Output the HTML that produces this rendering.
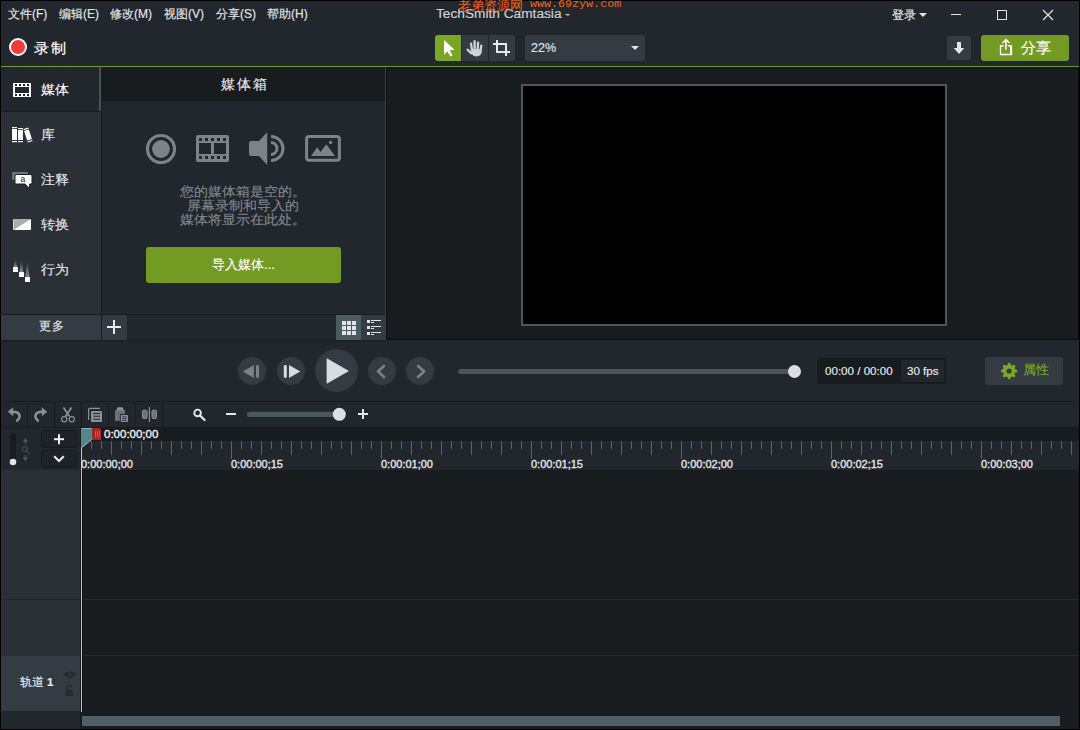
<!DOCTYPE html>
<html><head><meta charset="utf-8">
<style>
*{margin:0;padding:0;box-sizing:border-box}
html,body{width:1080px;height:730px;overflow:hidden;background:#000}
body{position:relative;font-family:"Liberation Sans",sans-serif;color:#e6e8eb}
.a{position:absolute}
.t{position:absolute;white-space:nowrap;line-height:1;-webkit-text-stroke:0.15px currentColor}
</style></head><body>
<!-- window frame -->
<div class="a" style="left:1px;top:1px;width:1078px;height:728px;background:#22262d"></div>

<!-- top bar -->
<div class="t" style="left:8px;top:8px;font-size:12px;color:#e4e6e9">文件(F)</div>
<div class="t" style="left:59px;top:8px;font-size:12px;color:#e4e6e9">编辑(E)</div>
<div class="t" style="left:110px;top:8px;font-size:12px;color:#e4e6e9">修改(M)</div>
<div class="t" style="left:164px;top:8px;font-size:12px;color:#e4e6e9">视图(V)</div>
<div class="t" style="left:216px;top:8px;font-size:12px;color:#e4e6e9">分享(S)</div>
<div class="t" style="left:267px;top:8px;font-size:12px;color:#e4e6e9">帮助(H)</div>
<div class="t" style="left:436px;top:7px;font-size:13.7px;color:#cfd3d8">TechSmith Camtasia -</div>

<!-- record -->
<div class="a" style="left:9px;top:38px;width:18px;height:18px;border-radius:50%;background:#f03c3c;border:2px solid #fff"></div>
<div class="t" style="left:34px;top:41px;font-size:14px;letter-spacing:1.5px;transform:scaleX(1.08);transform-origin:0 0;color:#fff;-webkit-text-stroke:0.2px #fff">录制</div>

<!-- green separator -->
<div class="a" style="left:1px;top:66px;width:1078px;height:1px;background:#6f9a22"></div>


<!-- center tools -->
<div class="a" style="left:435px;top:35px;width:80px;height:26px;border-radius:3px;background:#353b42;overflow:hidden">
  <div class="a" style="left:0;top:0;width:26px;height:26px;background:#7aa723"></div>
  <div class="a" style="left:26px;top:0;width:1px;height:26px;background:#22262d"></div>
  <div class="a" style="left:53px;top:0;width:1px;height:26px;background:#22262d"></div>
</div>
<!-- zoom dropdown -->
<div class="a" style="left:525px;top:35px;width:120px;height:26px;border-radius:3px;background:#353b42"></div>
<div class="t" style="left:531px;top:42px;font-size:12.5px;color:#e0e3e6">22%</div>
<div class="a" style="left:631px;top:46px;width:0;height:0;border-left:4px solid transparent;border-right:4px solid transparent;border-top:4px solid #e4e6e9"></div>

<!-- login & window controls -->
<div class="t" style="left:892px;top:9.5px;font-size:11.5px;letter-spacing:0.3px;color:#e4e6e9">登录</div>
<div class="a" style="left:919px;top:13px;width:0;height:0;border-left:4px solid transparent;border-right:4px solid transparent;border-top:4px solid #e4e6e9"></div>
<div class="a" style="left:951px;top:14px;width:10px;height:1px;background:#e4e6e9"></div>
<div class="a" style="left:997px;top:10px;width:10px;height:10px;border:1px solid #e4e6e9"></div>
<svg class="a" style="left:1042px;top:9px" width="12" height="12" viewBox="0 0 12 12"><path d="M1 1L11 11M11 1L1 11" stroke="#e4e6e9" stroke-width="1.2"/></svg>

<!-- download & share -->
<div class="a" style="left:947px;top:36px;width:24px;height:24px;border-radius:2px;background:#353b42"></div>
<svg class="a" style="left:953px;top:41px" width="12" height="14" viewBox="0 0 12 14"><path d="M4 1h4v6h3l-5 6l-5-6h3z" fill="#e8eaed"/></svg>
<div class="a" style="left:981px;top:35px;width:88px;height:26px;border-radius:3px;background:#739a22"></div>
<svg class="a" style="left:999px;top:38px" width="14" height="18" viewBox="0 0 14 18"><path d="M7 1.5v10M3.5 5L7 1.5L10.5 5M4.5 8H1.5v8.5h11V8H9.5" fill="none" stroke="#fff" stroke-width="1.3"/></svg>
<div class="t" style="left:1021px;top:40px;font-size:15px;color:#fff">分享</div>

<!-- LEFT TABS -->
<div class="a" style="left:1px;top:67px;width:100px;height:247px;background:#2b3037"></div>
<div class="a" style="left:1px;top:67px;width:98px;height:44px;background:#22262d"></div>
<div class="a" style="left:99px;top:67px;width:2px;height:44px;background:#4a5258"></div>
<div class="a" style="left:1px;top:111px;width:100px;height:1px;background:#191c1f"></div>
<div class="a" style="left:101px;top:67px;width:1px;height:274px;background:#191c1f"></div>
<div class="a" style="left:1px;top:314px;width:385px;height:1px;background:#191c1f"></div>

<div class="t" style="left:41px;top:83px;font-size:13px;transform:scaleX(1.077);transform-origin:0 0;-webkit-text-stroke:0.15px currentColor;color:#fff">媒体</div>
<div class="t" style="left:41px;top:128px;font-size:13px;transform:scaleX(1.077);transform-origin:0 0;-webkit-text-stroke:0.15px currentColor;color:#e4e6e9">库</div>
<div class="t" style="left:41px;top:173px;font-size:13px;transform:scaleX(1.077);transform-origin:0 0;-webkit-text-stroke:0.15px currentColor;color:#e4e6e9">注释</div>
<div class="t" style="left:41px;top:218px;font-size:13px;transform:scaleX(1.077);transform-origin:0 0;-webkit-text-stroke:0.15px currentColor;color:#e4e6e9">转换</div>
<div class="t" style="left:41px;top:263px;font-size:13px;transform:scaleX(1.077);transform-origin:0 0;-webkit-text-stroke:0.15px currentColor;color:#e4e6e9">行为</div>

<!-- more footer -->
<div class="a" style="left:1px;top:315px;width:100px;height:25px;background:#353b42"></div>
<div class="t" style="left:39px;top:320px;font-size:12px;letter-spacing:0.5px;color:#e4e6e9">更多</div>
<div class="a" style="left:102px;top:315px;width:25px;height:25px;background:#353b42"></div>
<div class="a" style="left:107px;top:326px;width:14px;height:2px;background:#e8eaed"></div>
<div class="a" style="left:113px;top:320px;width:2px;height:14px;background:#e8eaed"></div>

<!-- MEDIA BIN -->
<div class="a" style="left:102px;top:67px;width:284px;height:247px;background:#22262d"></div>
<div class="a" style="left:102px;top:67px;width:284px;height:34px;background:#191c1f"></div>
<div class="t" style="left:221px;top:77px;font-size:14px;letter-spacing:2px;color:#e8eaed">媒体箱</div>
<div class="a" style="left:386px;top:67px;width:1px;height:273px;background:#0c0e10"></div>
<div class="a" style="left:385px;top:67px;width:1px;height:248px;background:#3a4046"></div>

<div class="t" style="left:180px;top:185px;font-size:13px;transform:scaleX(1.077);transform-origin:0 0;-webkit-text-stroke:0.15px currentColor;color:#80868e">您的媒体箱是空的。</div>
<div class="t" style="left:187px;top:199px;font-size:13px;transform:scaleX(1.077);transform-origin:0 0;-webkit-text-stroke:0.15px currentColor;color:#80868e">屏幕录制和导入的</div>
<div class="t" style="left:180px;top:213px;font-size:13px;transform:scaleX(1.077);transform-origin:0 0;-webkit-text-stroke:0.15px currentColor;color:#80868e">媒体将显示在此处。</div>
<div class="a" style="left:146px;top:247px;width:195px;height:36px;border-radius:3px;background:#739a22"></div>
<div class="t" style="left:146px;top:258px;width:195px;text-align:center;font-size:13px;color:#fff">导入媒体...</div>

<!-- view buttons -->
<div class="a" style="left:336px;top:315px;width:25px;height:25px;background:#4b5c5f"></div>
<div class="a" style="left:361px;top:315px;width:25px;height:25px;background:#353b42"></div>

<!-- CANVAS -->
<div class="a" style="left:387px;top:67px;width:691px;height:272px;background:#191c1f"></div>
<div class="a" style="left:1078px;top:67px;width:1px;height:273px;background:#0c0e10"></div>
<div class="a" style="left:387px;top:67px;width:691px;height:1px;background:#0c0e10"></div>
<div class="a" style="left:1060px;top:716px;width:2px;height:10px;background:#2c3237"></div>
<div class="a" style="left:521px;top:84px;width:426px;height:242px;background:#000;border:2px solid #545454"></div>
<div class="a" style="left:386px;top:339px;width:693px;height:1px;background:#0c0e10"></div>
<div class="a" style="left:1px;top:340px;width:385px;height:1px;background:#191c1f"></div>

<!-- PLAYBACK BAR -->
<div class="a" style="left:1px;top:341px;width:1078px;height:60px;background:#22262d"></div>
<div class="a" style="left:387px;top:340px;width:692px;height:1px;background:#22262d"></div>
<div class="a" style="left:238px;top:357px;width:28px;height:28px;border-radius:50%;background:#353b42"></div>
<div class="a" style="left:277px;top:357px;width:28px;height:28px;border-radius:50%;background:#353b42"></div>
<div class="a" style="left:315px;top:349px;width:43px;height:43px;border-radius:50%;background:#353b42"></div>
<div class="a" style="left:368px;top:357px;width:28px;height:28px;border-radius:50%;background:#353b42"></div>
<div class="a" style="left:406px;top:357px;width:28px;height:28px;border-radius:50%;background:#353b42"></div>

<div class="a" style="left:458px;top:369px;width:338px;height:5px;border-radius:3px;background:#48575a"></div>
<div class="a" style="left:788px;top:365px;width:13px;height:13px;border-radius:50%;background:#dcdfe4"></div>

<div class="a" style="left:817px;top:358px;width:129px;height:26px;border-radius:2px;background:#191c1f"></div>
<div class="a" style="left:901px;top:360px;width:43px;height:22px;border-radius:1px;background:#22262d"></div>
<div class="t" style="left:825px;top:365px;font-size:11.6px;color:#e8eaed">00:00 / 00:00</div>
<div class="t" style="left:907px;top:365px;font-size:11.6px;color:#e8eaed">30 fps</div>

<div class="a" style="left:985px;top:357px;width:78px;height:28px;border-radius:3px;background:#353b42"></div>
<div class="t" style="left:1023px;top:363.5px;font-size:12.5px;letter-spacing:0.3px;color:#7aa82a">属性</div>

<!-- TIMELINE TOOLBAR -->
<div class="a" style="left:1px;top:401px;width:1078px;height:1px;background:#191c1f"></div>
<div class="a" style="left:1px;top:427px;width:1078px;height:1px;background:#191c1f"></div>

<!-- TIMELINE -->
<div class="a" style="left:1px;top:428px;width:80px;height:42px;background:#22262d"></div>
<div class="a" style="left:1px;top:470px;width:79px;height:186px;background:#2b3037"></div>
<div class="a" style="left:1px;top:599px;width:79px;height:1px;background:#22262d"></div>
<div class="a" style="left:1px;top:656px;width:79px;height:55px;background:#353b42"></div>
<div class="a" style="left:1px;top:711px;width:79px;height:18px;background:#22262d"></div>
<div class="a" style="left:80px;top:428px;width:1px;height:301px;background:#191c1f"></div>

<div class="a" style="left:81px;top:428px;width:998px;height:13px;background:#191c1f"></div>
<div class="a" style="left:81px;top:441px;width:998px;height:29px;background:#22262d"></div>
<div class="a" style="left:81px;top:470px;width:998px;height:259px;background:#191c1f"></div>
<div class="a" style="left:81px;top:599px;width:998px;height:1px;background:#262a2f"></div>
<div class="a" style="left:81px;top:655px;width:998px;height:1px;background:#262a2f"></div>
<div class="a" style="left:82px;top:716px;width:978px;height:10px;background:#4f5f63"></div>

<div class="t" style="left:20px;top:676px;font-size:12px;color:#e8eaed">轨道<span style="font-weight:bold;margin-left:3px;font-size:11.5px">1</span></div>


<svg class="a" style="left:0;top:0" width="1080" height="730" viewBox="0 0 1080 730">
<defs>
<linearGradient id="trail" x1="0" y1="0" x2="0" y2="1"><stop offset="0" stop-color="#8a9096" stop-opacity="0"/><stop offset="1" stop-color="#8a9096" stop-opacity="0.9"/></linearGradient>
</defs>
<!-- tab icons -->
<path fill="#fff" fill-rule="evenodd" d="M13 83h18v14h-18z M15 84h2v2h-2z M19 84h2v2h-2z M23 84h2v2h-2z M27 84h2v2h-2z M15 94h2v2h-2z M19 94h2v2h-2z M23 94h2v2h-2z M27 94h2v2h-2z M15 87h14v6h-14z"/>
<g fill="#fff">
<rect x="12" y="129" width="5" height="11"/><rect x="12" y="127" width="5" height="1.2"/><rect x="12" y="141" width="5" height="1.2"/>
<rect x="18" y="130" width="5" height="10"/><rect x="18" y="128" width="5" height="1.2"/><rect x="18" y="141" width="5" height="1.2"/>
<g transform="rotate(-18 28 135)"><rect x="25.5" y="130" width="5" height="10"/><rect x="25.5" y="128" width="5" height="1.2"/><rect x="25.5" y="141" width="5" height="1.2"/></g>
</g>
<rect x="12" y="172" width="16" height="8" rx="1" fill="#6e747c"/>
<path d="M16.5 174.5h14a1.5 1.5 0 0 1 1.5 1.5v6.5a1.5 1.5 0 0 1-1.5 1.5h-0.7l-0.5 4.5l-4.2-4.5h-8.6a1.5 1.5 0 0 1-1.5-1.5v-6.5a1.5 1.5 0 0 1 1.5-1.5z" fill="#fff" stroke="#1c1f23" stroke-width="1"/>
<text x="20.6" y="182.4" font-family="Liberation Sans" font-size="8.5" fill="#111" style="font-family:'Liberation Sans'">a</text>
<rect x="13" y="219" width="18" height="11" rx="1" fill="#fff"/>
<path d="M14 219h17l-17.5 11v-10z" fill="#a9acb0"/>
<path d="M15.4 259L17.2 267H13.6z" fill="url(#trail)"/>
<path d="M21.4 259.5L23.4 272H19.4z" fill="url(#trail)"/>
<path d="M27.4 260L29.6 277H25.2z" fill="url(#trail)"/>
<rect x="13" y="267" width="5" height="5" rx="0.6" fill="#fff"/>
<rect x="19" y="272" width="5" height="5" rx="0.6" fill="#fff"/>
<rect x="25" y="277" width="5" height="5" rx="0.6" fill="#fff"/>

<!-- tools -->
<path d="M444 40L454.5 49.8L449.6 50.4L452.6 55.4L450.4 56.6L447.4 51.6L444 54.8z" fill="#fff"/>
<g fill="#d0d4da" stroke="#d0d4da" stroke-linecap="round"><path d="M471 43.6L472 50M474.6 41.2V50M478.1 42.6L477.6 50M481.3 45.6L480.4 51M467.6 49.6L471.2 53.2" stroke-width="2.3" fill="none"/>
<path d="M470.8 49.2H481.6V52Q481.2 56.4 476.6 56.4Q473.2 56.4 471.2 53.4z" stroke="none"/></g>
<path d="M493 44H506V56 M497 40V52H510" fill="none" stroke="#e8eaed" stroke-width="2"/>

<!-- share / download -->
<path d="M957 43h4v5.3h3.1l-5.1 4.9l-5.1-4.9h3.1z" fill="#e2e5e9"/>
<path d="M1005.5 49.5V39.8 M1002.4 42.9L1005.5 39.8L1008.6 42.9 M1003.5 45.5H1001.5a1 1 0 0 0-1 1V53.5a1 1 0 0 0 1 1H1009.5a1 1 0 0 0 1-1V46.5a1 1 0 0 0-1-1H1007.5" fill="none" stroke="#fff" stroke-width="1"/>

<!-- media bin icons -->
<g fill="#7d838b">
<circle cx="161" cy="149" r="13.5" fill="none" stroke="#7d838b" stroke-width="3.2"/>
<circle cx="161" cy="149" r="8.9"/>
<path fill-rule="evenodd" d="M198 135h29a2 2 0 0 1 2 2v23a2 2 0 0 1-2 2h-29a2 2 0 0 1-2-2v-23a2 2 0 0 1 2-2z M199 138h3v3h-3z M205 138h3v3h-3z M211 138h3v3h-3z M217 138h3v3h-3z M223 138h3v3h-3z M199 156h3v3h-3z M205 156h3v3h-3z M211 156h3v3h-3z M217 156h3v3h-3z M223 156h3v3h-3z M199 143h12v11h-12z M214 143h12v11h-12z"/>
<path d="M251 141h8l8.2-8.8v32.8l-8.2-9h-8a2 2 0 0 1-2-2v-11a2 2 0 0 1 2-2z"/>
<path d="M271 142.5a6 6 0 0 1 0 12 M271 136.5a12 12 0 0 1 0 24" fill="none" stroke="#7d838b" stroke-width="3"/>
<rect x="306.6" y="136.5" width="32.8" height="23.8" rx="2.5" fill="none" stroke="#7d838b" stroke-width="3"/>
<path d="M311 156L317.3 147.2L320.5 152L326.3 144.3L335 156z"/>
<circle cx="330.6" cy="142.4" r="1.7"/>
</g>

<!-- grid/list -->
<g fill="#dfe2e6">
<rect x="342" y="321" width="4" height="4"/><rect x="347" y="321" width="4" height="4"/><rect x="352" y="321" width="4" height="4"/>
<rect x="342" y="326" width="4" height="4"/><rect x="347" y="326" width="4" height="4"/><rect x="352" y="326" width="4" height="4"/>
<rect x="342" y="331" width="4" height="4"/><rect x="347" y="331" width="4" height="4"/><rect x="352" y="331" width="4" height="4"/>
<rect x="367" y="320" width="3" height="3"/><rect x="371" y="320" width="10" height="1"/><rect x="371" y="322" width="3" height="1"/>
<rect x="367" y="326" width="3" height="3"/><rect x="371" y="326" width="10" height="1"/><rect x="371" y="328" width="3" height="1"/>
<rect x="367" y="332" width="3" height="3"/><rect x="371" y="332" width="10" height="1"/><rect x="371" y="334" width="3" height="1"/>
</g>

<!-- playback icons -->
<path d="M242.8 371.5L253.8 365v13z" fill="#7c8188"/><rect x="256" y="365" width="3" height="13" rx="1.4" fill="#7c8188"/>
<rect x="283.8" y="365" width="3" height="13" rx="1.4" fill="#d8dce2"/><path d="M289 365L300.3 371.5L289 378z" fill="#d8dce2"/>
<path d="M327 358.8L348.3 371L327 383.2z" fill="#d8dce2" stroke="#d8dce2" stroke-width="0.8" stroke-linejoin="round"/>
<path d="M384 366L378 371.4L384 377" fill="none" stroke="#7c8188" stroke-width="2.6" stroke-linecap="round" stroke-linejoin="round"/>
<path d="M418 366L424.2 371.4L418 377" fill="none" stroke="#7c8188" stroke-width="2.6" stroke-linecap="round" stroke-linejoin="round"/>

<!-- gear -->
<g transform="translate(1009.1 371)" fill="#7aa828">
<path fill-rule="evenodd" d="M0 -6.3 A6.3 6.3 0 1 1 0 6.3 A6.3 6.3 0 1 1 0 -6.3z M0 -2.6A2.6 2.6 0 1 0 0 2.6A2.6 2.6 0 1 0 0 -2.6z"/>
<g><circle cx="0" cy="-6.8" r="1.5"/><circle cx="0" cy="6.8" r="1.5"/><circle cx="-6.8" cy="0" r="1.5"/><circle cx="6.8" cy="0" r="1.5"/>
<circle cx="4.8" cy="4.8" r="1.5"/><circle cx="-4.8" cy="4.8" r="1.5"/><circle cx="4.8" cy="-4.8" r="1.5"/><circle cx="-4.8" cy="-4.8" r="1.5"/></g>
</g>

<!-- timeline toolbar separators -->
<g fill="#191c1f"><rect x="27" y="402" width="1" height="25"/><rect x="54" y="402" width="1" height="25"/><rect x="81" y="402" width="1" height="25"/><rect x="108" y="402" width="1" height="25"/><rect x="135" y="402" width="1" height="25"/><rect x="162" y="402" width="1" height="25"/></g>
<g fill="#8a9096" stroke="none">
<path d="M12.5 411.7Q19.6 411.7 19.6 416.2Q19.6 418.6 17.2 420.6" fill="none" stroke="#8a9096" stroke-width="2.6" stroke-linecap="round"/>
<path d="M7.8 411.7L13.2 407.2V416.2z"/>
<path d="M42.5 411.7Q35.4 411.7 35.4 416.2Q35.4 418.6 37.8 420.6" fill="none" stroke="#8a9096" stroke-width="2.6" stroke-linecap="round"/>
<path d="M47.2 411.7L41.8 407.2V416.2z"/>
<path d="M63.5 407.5L69.5 416.5M71.5 407.5L65.5 416.5" stroke="#8a9096" stroke-width="1.8" fill="none"/>
<circle cx="64.2" cy="419.2" r="2.6" fill="none" stroke="#8a9096" stroke-width="1.2"/>
<circle cx="71.8" cy="419.2" r="2.6" fill="none" stroke="#8a9096" stroke-width="1.2"/>
<path d="M88.6 420V409.6a1.2 1.2 0 0 1 1.2-1.2H100" fill="none" stroke="#8a9096" stroke-width="1.2"/>
<rect x="91" y="411" width="11" height="11" rx="1"/>
<path d="M93.3 413.5H100M93.3 416.3H100M93.3 419.3H100" stroke="#23272e" stroke-width="1.1"/>
<rect x="115" y="410" width="10" height="11" rx="0.8" fill="#6b7176"/>
<path d="M116.3 410.6L117.6 407.3H122.7L124 410.6z" fill="#8a9096"/>
<rect x="119.8" y="414" width="9.2" height="9" rx="1" fill="#23272e"/>
<rect x="120.8" y="415" width="7.2" height="7" rx="0.8" fill="#8a9096"/>
<path d="M122.2 416.9H126.6M122.2 418.7H126.6M122.2 420.5H126.6" stroke="#23272e" stroke-width="0.8"/>
<rect x="142.5" y="410.2" width="4.5" height="8.3" rx="1" fill="#6c7277" stroke="#8a9096" stroke-width="1"/>
<rect x="152" y="410.2" width="4.5" height="8.3" rx="1" fill="#6c7277" stroke="#8a9096" stroke-width="1"/>
<rect x="148.8" y="407" width="1.2" height="15"/>
</g>

<!-- zoom controls -->
<circle cx="197.6" cy="412.9" r="3.3" fill="none" stroke="#e3e6ea" stroke-width="1.9"/>
<path d="M200 415.5L204.6 420" stroke="#e3e6ea" stroke-width="2.3" stroke-linecap="round"/>
<rect x="226" y="413" width="10" height="2" fill="#e3e6ea"/>
<rect x="247" y="411.8" width="92" height="5.2" rx="2.6" fill="#48575a"/>
<circle cx="339.3" cy="414.3" r="6.5" fill="#dcdfe4"/>
<rect x="358" y="413" width="10" height="2" fill="#e3e6ea"/>
<rect x="362" y="409" width="2" height="10" fill="#e3e6ea"/>

<!-- timeline header left -->
<rect x="10" y="433" width="6" height="33" rx="3" fill="#191c1f"/>
<circle cx="13" cy="462" r="3.3" fill="#e2e4e8"/>
<g fill="#4e5e60" stroke="none">
<path d="M25.4 438L28 441.8H22.8z"/><rect x="24.9" y="441" width="1" height="3"/>
<circle cx="24.8" cy="449" r="2.5" fill="none" stroke="#4e5e60" stroke-width="0.9"/>
<path d="M26.6 450.8L29.8 453.8" stroke="#4e5e60" stroke-width="1"/>
<rect x="24.9" y="455" width="1" height="3"/><path d="M25.4 461L28 457.2H22.8z"/>
</g>
<rect x="41.5" y="430.5" width="35" height="17" rx="2" fill="#1f2327" stroke="#181b1e"/>
<rect x="41.5" y="450.5" width="35" height="17" rx="2" fill="#1f2327" stroke="#181b1e"/>
<rect x="54" y="438.2" width="10" height="2" fill="#eceef0"/>
<rect x="58" y="434.2" width="2" height="10" fill="#eceef0"/>
<path d="M54.2 456.3L59 461L63.8 456.3" fill="none" stroke="#eceef0" stroke-width="2"/>

<!-- eye/lock -->
<path d="M63 674.5Q69.5 668.5 76 674.5Q69.5 680.5 63 674.5z" fill="#262b30"/>
<circle cx="69.5" cy="674.5" r="1.6" fill="#353b42"/>
<rect x="65.5" y="690" width="7.5" height="6" rx="0.5" fill="#262b30"/>
<path d="M67 690v-2.2a2.2 2.2 0 0 1 4.4 0" fill="none" stroke="#262b30" stroke-width="1.3"/>
</svg>

<svg class="a" style="left:0;top:0" width="1080" height="730"><g fill="#56636a"><rect x="81" y="441" width="1" height="18"/><rect x="91" y="441" width="1" height="8"/><rect x="101" y="441" width="1" height="8"/><rect x="111" y="441" width="1" height="14"/><rect x="121" y="441" width="1" height="8"/><rect x="131" y="441" width="1" height="8"/><rect x="141" y="441" width="1" height="14"/><rect x="151" y="441" width="1" height="8"/><rect x="161" y="441" width="1" height="8"/><rect x="171" y="441" width="1" height="14"/><rect x="181" y="441" width="1" height="8"/><rect x="191" y="441" width="1" height="8"/><rect x="201" y="441" width="1" height="14"/><rect x="211" y="441" width="1" height="8"/><rect x="221" y="441" width="1" height="8"/><rect x="231" y="441" width="1" height="18"/><rect x="241" y="441" width="1" height="8"/><rect x="251" y="441" width="1" height="8"/><rect x="261" y="441" width="1" height="14"/><rect x="271" y="441" width="1" height="8"/><rect x="281" y="441" width="1" height="8"/><rect x="291" y="441" width="1" height="14"/><rect x="301" y="441" width="1" height="8"/><rect x="311" y="441" width="1" height="8"/><rect x="321" y="441" width="1" height="14"/><rect x="331" y="441" width="1" height="8"/><rect x="341" y="441" width="1" height="8"/><rect x="351" y="441" width="1" height="14"/><rect x="361" y="441" width="1" height="8"/><rect x="371" y="441" width="1" height="8"/><rect x="381" y="441" width="1" height="18"/><rect x="391" y="441" width="1" height="8"/><rect x="401" y="441" width="1" height="8"/><rect x="411" y="441" width="1" height="14"/><rect x="421" y="441" width="1" height="8"/><rect x="431" y="441" width="1" height="8"/><rect x="441" y="441" width="1" height="14"/><rect x="451" y="441" width="1" height="8"/><rect x="461" y="441" width="1" height="8"/><rect x="471" y="441" width="1" height="14"/><rect x="481" y="441" width="1" height="8"/><rect x="491" y="441" width="1" height="8"/><rect x="501" y="441" width="1" height="14"/><rect x="511" y="441" width="1" height="8"/><rect x="521" y="441" width="1" height="8"/><rect x="531" y="441" width="1" height="18"/><rect x="541" y="441" width="1" height="8"/><rect x="551" y="441" width="1" height="8"/><rect x="561" y="441" width="1" height="14"/><rect x="571" y="441" width="1" height="8"/><rect x="581" y="441" width="1" height="8"/><rect x="591" y="441" width="1" height="14"/><rect x="601" y="441" width="1" height="8"/><rect x="611" y="441" width="1" height="8"/><rect x="621" y="441" width="1" height="14"/><rect x="631" y="441" width="1" height="8"/><rect x="641" y="441" width="1" height="8"/><rect x="651" y="441" width="1" height="14"/><rect x="661" y="441" width="1" height="8"/><rect x="671" y="441" width="1" height="8"/><rect x="681" y="441" width="1" height="18"/><rect x="691" y="441" width="1" height="8"/><rect x="701" y="441" width="1" height="8"/><rect x="711" y="441" width="1" height="14"/><rect x="721" y="441" width="1" height="8"/><rect x="731" y="441" width="1" height="8"/><rect x="741" y="441" width="1" height="14"/><rect x="751" y="441" width="1" height="8"/><rect x="761" y="441" width="1" height="8"/><rect x="771" y="441" width="1" height="14"/><rect x="781" y="441" width="1" height="8"/><rect x="791" y="441" width="1" height="8"/><rect x="801" y="441" width="1" height="14"/><rect x="811" y="441" width="1" height="8"/><rect x="821" y="441" width="1" height="8"/><rect x="831" y="441" width="1" height="18"/><rect x="841" y="441" width="1" height="8"/><rect x="851" y="441" width="1" height="8"/><rect x="861" y="441" width="1" height="14"/><rect x="871" y="441" width="1" height="8"/><rect x="881" y="441" width="1" height="8"/><rect x="891" y="441" width="1" height="14"/><rect x="901" y="441" width="1" height="8"/><rect x="911" y="441" width="1" height="8"/><rect x="921" y="441" width="1" height="14"/><rect x="931" y="441" width="1" height="8"/><rect x="941" y="441" width="1" height="8"/><rect x="951" y="441" width="1" height="14"/><rect x="961" y="441" width="1" height="8"/><rect x="971" y="441" width="1" height="8"/><rect x="981" y="441" width="1" height="18"/><rect x="991" y="441" width="1" height="8"/><rect x="1001" y="441" width="1" height="8"/><rect x="1011" y="441" width="1" height="14"/><rect x="1021" y="441" width="1" height="8"/><rect x="1031" y="441" width="1" height="8"/><rect x="1041" y="441" width="1" height="14"/><rect x="1051" y="441" width="1" height="8"/><rect x="1061" y="441" width="1" height="8"/><rect x="1071" y="441" width="1" height="14"/></g>
<rect x="81" y="440" width="1" height="272" fill="#b3d0e3"/>
<rect x="82" y="470" width="1" height="242" fill="#0b0e10"/>
<path d="M81 428H92.5V438.8L81.5 447.8H81z" fill="#55868b"/>
<path d="M81.5 428.5H92" stroke="#9fc0c4" stroke-width="0.8"/>
<path d="M92.5 438.8L81.5 447.8" stroke="#9fc0c4" stroke-width="1"/>
<path d="M92.5 428H99.5a1.5 1.5 0 0 1 1.5 1.5V440H92.5z" fill="#b3221f"/>
<path d="M95.5 431V437.5M97.5 431V437.5M99.5 431V437.5" stroke="#d9605c" stroke-width="0.8"/>
</svg>
<div class="t" style="left:81px;top:459px;font-size:11px;color:#e2e5e9;-webkit-text-stroke:0.35px #e2e5e9">0:00:00;00</div><div class="t" style="left:231px;top:459px;font-size:11px;color:#e2e5e9;-webkit-text-stroke:0.35px #e2e5e9">0:00:00;15</div><div class="t" style="left:381px;top:459px;font-size:11px;color:#e2e5e9;-webkit-text-stroke:0.35px #e2e5e9">0:00:01;00</div><div class="t" style="left:531px;top:459px;font-size:11px;color:#e2e5e9;-webkit-text-stroke:0.35px #e2e5e9">0:00:01;15</div><div class="t" style="left:681px;top:459px;font-size:11px;color:#e2e5e9;-webkit-text-stroke:0.35px #e2e5e9">0:00:02;00</div><div class="t" style="left:831px;top:459px;font-size:11px;color:#e2e5e9;-webkit-text-stroke:0.35px #e2e5e9">0:00:02;15</div><div class="t" style="left:981px;top:459px;font-size:11px;color:#e2e5e9;-webkit-text-stroke:0.35px #e2e5e9">0:00:03;00</div>
<div class="t" style="left:104px;top:429px;font-size:11.5px;color:#eef0f2;-webkit-text-stroke:0.35px #eef0f2">0:00:00;00</div>
<div class="t" style="left:458px;top:-1px;font-size:13px;font-family:'Liberation Serif',serif;color:#ec6418;-webkit-text-stroke:0">老弟资源网</div>
<div class="t" style="left:530px;top:-1.5px;font-size:11.7px;font-family:'Liberation Mono',monospace;color:#ec6418;-webkit-text-stroke:0">www.69zyw.com</div>

</body></html>
